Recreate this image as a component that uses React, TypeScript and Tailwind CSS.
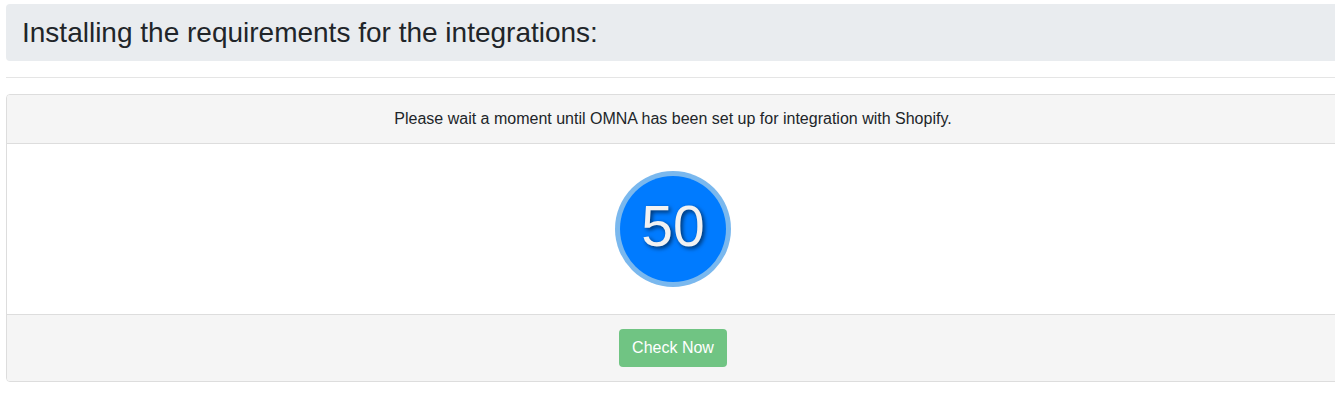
export default function App() {
  return (
    <div className="w-[1335px] h-[414px] overflow-hidden bg-white" style={{ fontFamily: '"Liberation Sans", Arial, sans-serif' }}>
      <div className="w-[1334px] ml-[6px] pt-[4px]">
        <div className="h-[57px] bg-[#e9ecef] rounded-[4px] flex items-center pl-[16px]">
          <h1 className="text-[28px] text-[#212529] leading-none">Installing the requirements for the integrations:</h1>
        </div>
        <div className="mt-[16px] border-t border-[#e5e5e5]" />
        <div className="mt-[16px] border border-[#dddddd] rounded-[4px] overflow-hidden">
          <div className="h-[49px] bg-[#f5f5f5] border-b border-[#dddddd] flex items-center justify-center text-[16px] text-[#212529]">
            Please wait a moment until OMNA has been set up for integration with Shopify.
          </div>
          <div className="h-[170px] bg-white flex items-center justify-center">
            <div className="w-[116px] h-[116px] rounded-full bg-[#7ab8ee] flex items-center justify-center">
              <div className="w-[106px] h-[106px] rounded-full bg-[#007bff] flex items-center justify-center pb-[5px]">
                <span className="text-[57px] text-[#f2f2f2] leading-none" style={{ textShadow: '2px 2px 4px rgba(0,0,0,0.6)' }}>50</span>
              </div>
            </div>
          </div>
          <div className="h-[67px] bg-[#f5f5f5] border-t border-[#dddddd] flex items-center justify-center">
            <button className="w-[108px] h-[38px] rounded-[4px] bg-[#70c483] text-white text-[16px]">Check Now</button>
          </div>
        </div>
      </div>
    </div>
  );
}
